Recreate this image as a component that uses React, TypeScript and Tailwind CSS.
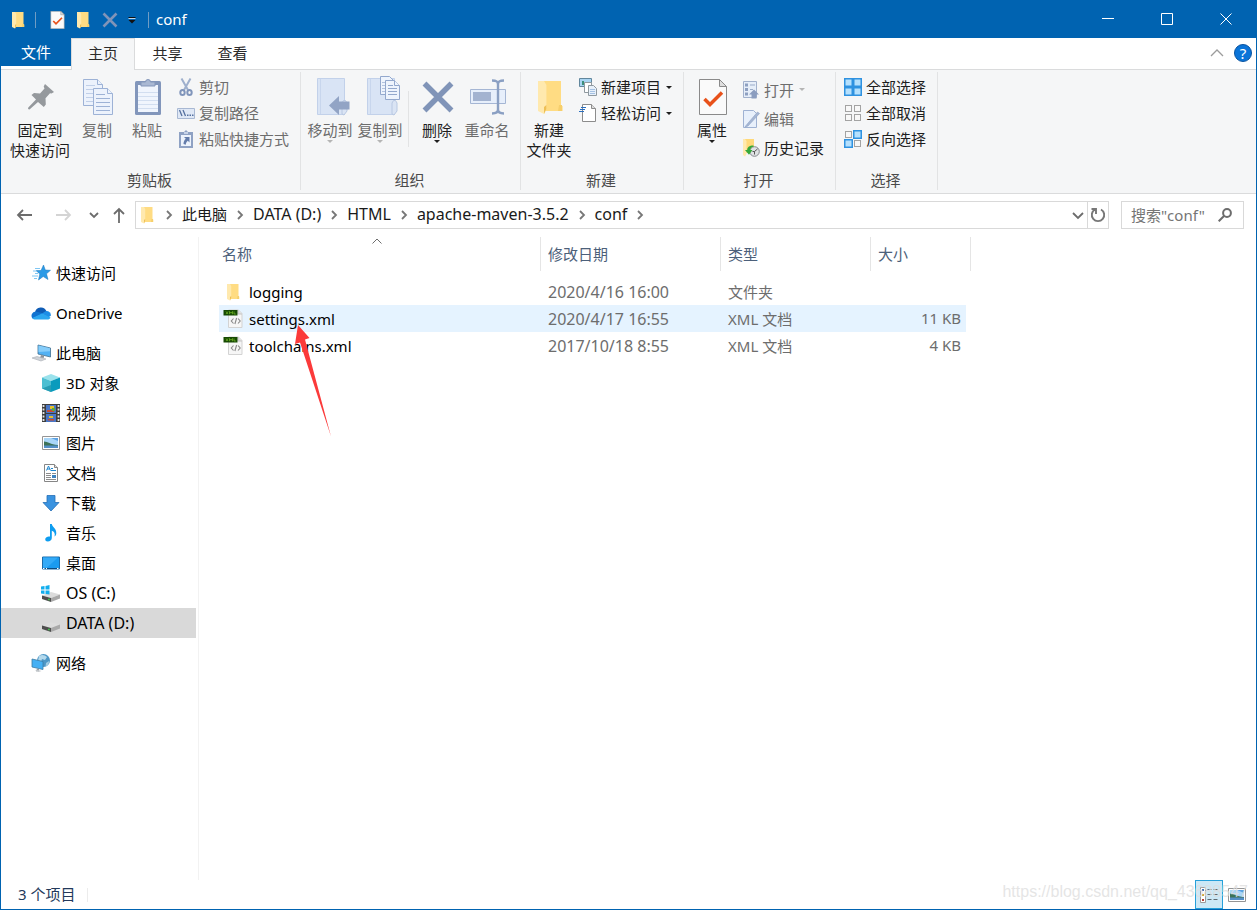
import React from "react";

type IconProps = { className?: string };

const FolderIcon = ({ className = "h-[18px] w-[14px]" }: IconProps) => (
  <svg viewBox="0 0 14 18" className={className} aria-hidden="true">
    <path d="M4 1h8.500v12.500h.8V16H4z" fill="#ffdc83" />
    <path d="M11.500 13h1.500v3h-2z" fill="#f6cf6c" />
    <path d="M1 1h3l1.200 2v12L4 17.500 1 16z" fill="#ffe9ae" />
    <path d="M5.200 13v2L4 17.500V14z" fill="#eebf55" />
  </svg>
);

const CheckDocIcon = ({ className = "h-[18px] w-[15px]" }: IconProps) => (
  <svg viewBox="0 0 28 36" className={className} aria-hidden="true">
    <path d="M.5.5h20l7 7v28H.5z" fill="#fafafa" stroke="#8a8a8a" />
    <path d="M20.500.5v7h7z" fill="#dedede" stroke="#8a8a8a" />
    <path d="M5.500 20l5.500 5.500L23 13.500" fill="none" stroke="#e8511a" strokeWidth="3.500" />
  </svg>
);

const PinIcon = () => (
  <svg viewBox="0 0 26 26" className="size-[26px]" aria-hidden="true">
    <path d="M17 0l9 8-2.500 1.500-1.500-.3-4.500 5 .3 6.300-2 2.500-5.800-5L1.500 25.500 0 25l.3-1.500L8 15.500 3.500 11l2.500-2 6 .5 4.500-5-.8-2z" fill="#95999d" />
  </svg>
);

const CopyIcon = () => (
  <svg viewBox="0 0 32 38" className="h-[38px] w-8" aria-hidden="true">
    <g stroke="#9db2d6" fill="#ecf2fc">
      <path d="M1.500 1.500h14l5 5v21h-19z" />
      <path d="M15.500 1.500v5h5" />
      <path d="M4 7.500h9M4 11.500h13M4 15.500h13M4 19.500h13M4 23.500h13" stroke="#c0cfe8" />
      <path d="M11.500 10.500h14l5 5v21h-19z" />
      <path d="M25.500 10.500v5h5" />
      <path d="M14 16.500h9M14 20.500h14M14 24.500h14M14 28.500h14M14 32.500h14" />
    </g>
  </svg>
);

const PasteIcon = () => (
  <svg viewBox="0 0 28 38" className="h-[38px] w-7" aria-hidden="true">
    <rect x="1" y="3" width="26" height="34" rx="1.500" fill="#8296bb" />
    <path d="M4 7h20v27H4z" fill="#f0f5fd" />
    <path d="M4 14.500h20M4 18.500h20M4 22.500h20M4 26.500h20M4 30.500h20" stroke="#d2def0" />
    <path d="M7 4h4.500a2.500 2.500 0 0 1 5 0H21v4H7z" fill="#a9b8d3" stroke="#8497ba" />
  </svg>
);

const CutIcon = () => (
  <svg viewBox="0 0 18 18" className="size-[18px]" fill="none" aria-hidden="true">
    <path d="M4.500.5L11 12M13.500.5L7 12" stroke="#9fb0cd" strokeWidth="2" />
    <ellipse cx="5.500" cy="14.500" rx="2.200" ry="2.500" stroke="#8095bb" strokeWidth="2" />
    <ellipse cx="12.500" cy="14.500" rx="2.200" ry="2.500" stroke="#8095bb" strokeWidth="2" />
  </svg>
);

const PathIcon = () => (
  <svg viewBox="0 0 18 18" className="size-[18px]" aria-hidden="true">
    <path d="M.5 4.500h17v10H.5z" fill="#dfe8f6" stroke="#a8b8d3" />
    <path d="M2.500 6l2.500 6M6 6l2.500 6" stroke="#54709f" strokeWidth="1.300" />
    <path d="M10 10.500h1.500V12H10zM12.500 10.500H14V12h-1.500zM15 10.500h1.500V12H15z" fill="#54709f" />
  </svg>
);

const PasteShortcutIcon = () => (
  <svg viewBox="0 0 18 18" className="size-[18px]" aria-hidden="true">
    <path d="M2 2h5l2-2 2 2h5v16H2z" fill="#8fa2c4" />
    <path d="M4 5h10v11H4z" fill="#edf3fc" />
    <path d="M7 2h4v2H7z" fill="#c7d3e8" />
    <path d="M7 7h5.500v5.500l-1.700-1.700c-1.500 1.200-2 2.500-2 4L6.500 14c0-2 .7-3.800 2.300-5.200z" fill="#637cab" />
  </svg>
);

const Notebook = () => (
  <>
    <path d="M.5.5h27v36H.5z" fill="#d9e4f5" stroke="#c2d1ea" />
    <path d="M3.500 1v35" stroke="#c8d6ed" />
    <path d="M25 36V25l1.500-2.500h2L30 25v8l-3 4z" fill="#dae4f4" stroke="#b8c8e2" />
  </>
);

const MoveToIcon = () => (
  <svg viewBox="0 0 33 38" className="ml-1 h-[38px] w-[33px]" aria-hidden="true">
    <Notebook />
    <path d="M12 27.500L22 18v5.500h10.500v8H22V37z" fill="#92a4c5" />
  </svg>
);

const CopyToIcon = () => (
  <svg viewBox="0 0 33 38" className="ml-1 h-[38px] w-[33px] overflow-visible" aria-hidden="true">
    <Notebook />
    <g fill="#eef4fd" stroke="#93a8cd">
      <path d="M13.500-1.500h9l4 4v14h-13z" />
      <path d="M15 4.500h4M15 7.500h4M15 10.500h4M15 13.500h4" stroke="#b3c3df" />
      <path d="M18.500 2.500h9l5 5v14h-14z" />
      <path d="M27.500 2.500v5h5M21 7.500h5M21 10.500h9M21 13.500h9M21 16.500h9" />
    </g>
  </svg>
);

const DeleteIcon = () => (
  <svg viewBox="0 0 32 32" className="size-8" aria-hidden="true">
    <path d="M2.500 2.500l27 27M29.500 2.500l-27 27" stroke="#8094b8" strokeWidth="5.500" />
  </svg>
);

const RenameIcon = () => (
  <svg viewBox="0 0 37 36" className="h-9 w-[37px]" aria-hidden="true">
    <path d="M.5 10.500h35v14H.5z" fill="#e7effb" stroke="#a5b6d4" />
    <path d="M3 13h18v9H3z" fill="#a3b3d0" />
    <path d="M22 1.500c4 0 6 .5 6 4v25c0 3-2 4-6 4M34 1.500c-4 0-6 .5-6 4v25c0 3 2 4 6 4" fill="none" stroke="#8ba0c3" strokeWidth="2.400" />
  </svg>
);

const NewItemIcon = () => (
  <svg viewBox="0 0 18 18" className="size-[18px]" aria-hidden="true">
    <path d="M.5.5h12v8H.5z" fill="#a8d4f2" stroke="#62879d" />
    <path d="M3 3h2v4H3z" fill="#3c8f7c" />
    <path d="M5.500 4.500h7v10h-7z" fill="#fff" stroke="#8f999f" />
    <path d="M9.500 7.500h5l3 3v7h-8z" fill="#e7f0fa" stroke="#8f999f" />
    <path d="M11 11.500h5M11 13.500h5M11 15.500h5" stroke="#a5c1e2" />
  </svg>
);

const EasyAccessIcon = () => (
  <svg viewBox="0 0 18 18" className="size-[18px]" aria-hidden="true">
    <path d="M3.500.5h9l4 4v13h-13z" fill="#fff" stroke="#8c8c8c" />
    <path d="M12.500.5v4h4" fill="#ddd" stroke="#8c8c8c" />
    <path d="M2 3.500h5M1 5.500h5M0 7.500h5" stroke="#2a6fc0" />
  </svg>
);

const OpenIcon = () => (
  <svg viewBox="0 0 18 18" className="size-[18px]" aria-hidden="true">
    <path d="M1.500.5h13v16h-13z" fill="#e6eef9" stroke="#a2b1cc" />
    <path d="M3 2.500h3v3H3zM3 7h3v3H3zM3 11.500h3v3H3z" fill="#8ea0c1" />
    <path d="M8 4h5M8 8.500h3" stroke="#9aabc8" />
    <path d="M12 8.500l5 5h-2.500v4h-5v-4H7z" fill="#8b9dbf" />
  </svg>
);

const EditIcon = () => (
  <svg viewBox="0 0 18 18" className="size-[18px]" aria-hidden="true">
    <path d="M1.500.5h10l3 3v14h-13z" fill="#e8f0fb" stroke="#9fb2d3" />
    <path d="M4 15.500L15.500 2l2 1.500L6 16l-3 1z" fill="#a5b6d3" stroke="#8ea2c6" strokeWidth=".6" />
  </svg>
);

const HistoryIcon = () => (
  <svg viewBox="0 0 18 18" className="size-[18px]" aria-hidden="true">
    <path d="M3 0h9v14H3z" fill="#ffd97a" />
    <path d="M1 0h2l1.500 2v13L3 17.500 1 16z" fill="#ffe9ae" />
    <circle cx="12.500" cy="12.500" r="4.800" fill="#dfe2e4" stroke="#85898d" />
    <path d="M15.500 10l-3 2.500v3M12.500 12.500h-2" stroke="#555" fill="none" />
    <path d="M11.500 6.500C7 6.500 5.200 8.500 5.200 11H3l4 4.800 3.500-4.800H8.300c0-2 1.200-3 3.200-3.200z" fill="#35a83a" />
  </svg>
);

// four tiles, the lit ones are drawn in blue
const TilesIcon = ({ lit }: { lit: boolean[] }) => (
  <svg viewBox="0 0 18 18" className="size-[18px]" aria-hidden="true">
    {[[0, 0], [9, 0], [0, 9], [9, 9]].map(([x, y], i) =>
      lit[i] ? (
        <rect key={i} x={x + 0.75} y={y + 0.75} width="7.500" height="7.500" fill="#b5e0fd" stroke="#2f92e0" strokeWidth="1.500" />
      ) : (
        <rect key={i} x={x + 1.5} y={y + 1.5} width="6" height="6" fill="#f8f8f8" stroke="#a3a3a3" />
      )
    )}
  </svg>
);

const StarIcon = () => (
  <svg viewBox="0 0 20 20" className="size-5" aria-hidden="true">
    <path d="M12.500 2l1.800 5 5.200.3-4 3.500 1.500 5.700-4.800-3-4.700 3.500 1.300-6L5 7.500h5z" fill="#2a9ae6" stroke="#1b76bd" strokeWidth=".5" />
    <path d="M4 5.500h5M2 8h4M4 10.500h3M1 13h6M3 15.500h3" stroke="#7fc6f3" strokeWidth="1.200" />
  </svg>
);

const OneDriveIcon = () => (
  <svg viewBox="0 0 20 20" className="size-5" aria-hidden="true">
    <path d="M4 9.500a6 6 0 0 1 11.500-1.300L12 12z" fill="#0f5cb5" />
    <path d="M4.500 8.500a4.300 4.300 0 0 0-3 7L13 10.500z" fill="#1173d0" />
    <path d="M11 10.500l4-2.500a4.200 4.200 0 0 1 4.800 4.800l-3 2z" fill="#1e8ee6" />
    <path d="M1.300 15l9.700-4.500 8.500 4c-.5 1.500-1.800 2-3 2H4.500c-1.500 0-2.500-.5-3.200-1.500z" fill="#2ba6f0" />
  </svg>
);

const ComputerIcon = () => (
  <svg viewBox="0 0 20 20" className="size-5" aria-hidden="true">
    <path d="M7 2l12.500 3v9L7 11z" fill="#52b1f3" stroke="#42708f" strokeWidth=".8" />
    <path d="M7.500 2.500L19 5.300v3L7.500 9z" fill="#86cdfa" />
    <path d="M10 12l3 .7v2l-4 .3z" fill="#8b9299" />
    <path d="M1 15l5-1.500 9 2.500-5 2z" fill="#cfd3d8" stroke="#a8adb3" strokeWidth=".6" />
  </svg>
);

const CubeIcon = () => (
  <svg viewBox="0 0 20 20" className="size-5" aria-hidden="true">
    <path d="M10 1l9 3.500-9 3.500-9-3.500z" fill="#9be2ec" />
    <path d="M1 4.500L10 8v11l-9-3.500z" fill="#4bbfd2" />
    <path d="M19 4.500L10 8v11l9-3.500z" fill="#0a9bbd" />
    <path d="M1 15.500L10 12v7z" fill="#279db4" />
  </svg>
);

const VideoIcon = () => (
  <svg viewBox="0 0 20 20" className="size-5" aria-hidden="true">
    <path d="M1 1h18v18H1z" fill="#3e3e3e" />
    <path d="M2.500 2v17M17.500 2v17" stroke="#e4e4e4" strokeWidth="1.800" strokeDasharray="2 1.500" />
    <path d="M5 2h10v8H5zM5 11h10v8H5z" fill="#4976c5" />
    <path d="M9 3h4v3H9zM8 13h4v2H8z" fill="#e8c02a" />
    <path d="M6 7h7v2H6zM7 16h6v1.500H7z" fill="#c64a35" />
    <path d="M11 5h3v3h-3z" fill="#5ea83b" />
  </svg>
);

const PictureIcon = ({ className = "size-5" }: IconProps) => (
  <svg viewBox="0 0 20 20" className={className} aria-hidden="true">
    <path d="M1.500 3.500h17v13h-17z" fill="#fff" stroke="#959595" />
    <path d="M3 5h14v10H3z" fill="#a9d6f8" />
    <path d="M3 5h7l7 3V5z" fill="#5ba0e2" />
    <path d="M3 8.500c4 0 6 3 14 3.500v1H3z" fill="#3d7257" />
    <path d="M3 12.500h14V15H3z" fill="#548fc7" />
  </svg>
);

const DocumentIcon = () => (
  <svg viewBox="0 0 20 20" className="size-5" aria-hidden="true">
    <path d="M3.500 1.500h10l3 3v14h-13z" fill="#fff" stroke="#868686" />
    <path d="M13.500 1.500v3h3" fill="#ddd" stroke="#868686" />
    <path d="M5.500 7.500L7.500 3l2 4.500M6 6h3M10 5.500h2M10 7.500h5" fill="none" stroke="#1e87cf" />
    <path d="M5 10.500h5M5 12.500h5M5 14.500h5M5 16.500h10M11 10.500h4" stroke="#8c8c8c" />
    <path d="M11 12h4v3h-4z" fill="#3f83bf" />
  </svg>
);

const DownloadIcon = () => (
  <svg viewBox="0 0 20 20" className="size-5" aria-hidden="true">
    <path d="M6 2.500h8v7h4L10 18 2 9.500h4z" fill="#3a93e0" stroke="#256fb6" strokeWidth=".8" />
  </svg>
);

const MusicIcon = () => (
  <svg viewBox="0 0 20 20" className="size-5" aria-hidden="true">
    <path d="M9 1h1.800c.3 3 4.900 4.500 4.500 9.500-.1 1.500-1 2.500-1.800 3 .9-3-.3-5-2.700-5.800V15c0 2.200-2 3.500-4 3.500S4 17.300 4.300 15.800C4.600 14 7 13 9 13.600z" fill="#0e9df0" />
  </svg>
);

const DesktopIcon = () => (
  <svg viewBox="0 0 20 20" className="size-5" aria-hidden="true">
    <path d="M1.500 4h17v12h-17z" fill="#1a9bf0" stroke="#1a6ba9" />
    <path d="M2 4.500h15L6 14.500H2z" fill="#33aaf7" />
    <path d="M2 15.500h16" stroke="#0c4a7d" />
    <path d="M2 15.500h1.500M5 15.500h1M16 15.500h1.500" stroke="#fff" />
  </svg>
);

const DriveIcon = ({ system = false }: { system?: boolean }) => (
  <svg viewBox="0 0 20 20" className="size-5" aria-hidden="true">
    <path d="M1 12.500l9-3.500 9 2.500-9 3.500z" fill="#dcdcdc" />
    <path d="M1 12.500l9 2.500v4l-9-3z" fill="#4e4e4e" />
    <path d="M19 11.500L10 15v4l9-3.500z" fill="#a9a9a9" />
    <path d="M7 15.700h1.800v1.500H7z" fill="#3fc04b" />
    {system && (
      <path d="M0 3.500l3.500-.5v3.500H0zM4.500 2.900L8.500 2v4.500h-4zM0 7.500h3.500V11L0 10.500zM4.500 7.500h4v4l-4-.6z" fill="#12aeee" />
    )}
  </svg>
);

const NetworkIcon = () => (
  <svg viewBox="0 0 20 20" className="size-5" aria-hidden="true">
    <circle cx="12.500" cy="7.500" r="6.500" fill="#4e97c6" />
    <path d="M8 3c3-2 6-1 8 1l-2 3-3-1-1 3-3-1z" fill="#b4d9ec" />
    <path d="M15 10l3-2c.3 3-1.500 5-3.500 5.500z" fill="#a1cbe2" />
    <path d="M1 6l11 2.500v8L1 14z" fill="#45b0f4" stroke="#3b7ba5" strokeWidth=".8" />
    <path d="M6 15.500l2 .5v2l-3 .5z" fill="#9aa0a6" />
    <path d="M4 17.500l3-.5 3.500 1-3 1z" fill="#c3c7cb" />
  </svg>
);

const XmlIcon = () => (
  <svg viewBox="0 0 20 20" className="size-5" aria-hidden="true">
    <path d="M5.500 1h10L19 4.500V18.500H5.500z" fill="#f6f6f6" stroke="#d3d3d3" />
    <path d="M15 1v4h4" fill="#e2e2e2" stroke="#c4c4c4" />
    <path d="M.5 1h14v5.500H.5z" fill="#174a03" />
    <path d="M3 2.500l2 2.500M5 2.500L3 5M6.500 5.200V2.500L8 4.200l1.500-1.700v2.700M11 2.500v2.500h1.800" fill="none" stroke="#6fb325" strokeWidth=".8" />
    <path d="M10.500 9.500L8.300 12l2.200 2.500M15 9.500l2.200 2.500-2.200 2.500M13.600 9l-1.700 6" fill="none" stroke="#898989" strokeWidth="1.100" />
  </svg>
);

const Chevron = ({ className = "", d = "M1 1l4 4-4 4" }: { className?: string; d?: string }) => (
  <svg viewBox="0 0 10 10" className={`size-2.5 shrink-0 overflow-visible ${className}`} fill="none" stroke="currentColor" strokeWidth="1.800" aria-hidden="true">
    <path d={d} />
  </svg>
);

const Caret = ({ className = "" }: IconProps) => (
  <svg viewBox="0 0 6 3" className={`h-[3px] w-1.5 ${className}`} aria-hidden="true">
    <path d="M0 0h6L3 3z" fill="currentColor" />
  </svg>
);

interface ToolProps {
  icon: React.ReactNode;
  lines: string[];
  className?: string;
  muted?: boolean;
  caret?: boolean;
}

const BigTool = ({ icon, lines, className = "w-[50px]", muted, caret }: ToolProps) => (
  <button type="button" className={`flex shrink-0 flex-col items-center ${muted ? "text-[#6d6d6d]" : "text-[#1e1e1e]"} ${className}`}>
    <span className="flex h-10 items-center justify-center pl-0.5">{icon}</span>
    <span className="mt-[3px] whitespace-nowrap leading-5">
      {lines.map((line) => (
        <span key={line} className="block">{line}</span>
      ))}
    </span>
    {caret && <Caret className={muted ? "text-[#b5b5b5]" : "text-[#1e1e1e]"} />}
  </button>
);

interface SmallToolProps {
  icon: React.ReactNode;
  label: string;
  muted?: boolean;
  caret?: boolean;
  className?: string;
}

const SmallTool = ({ icon, label, muted, caret, className = "h-[26px]" }: SmallToolProps) => (
  <button type="button" className={`flex items-center gap-1 whitespace-nowrap ${muted ? "text-[#6d6d6d]" : "text-[#1e1e1e]"} ${className}`}>
    {icon}
    <span>{label}</span>
    {caret && <Caret className={`ml-px ${muted ? "text-[#b5b5b5]" : ""}`} />}
  </button>
);

const Group = ({ title, className, children }: { title: string; className: string; children: React.ReactNode }) => (
  <section className={`flex shrink-0 flex-col justify-between border-r border-[#e2e3e4] ${className}`}>
    <div className="flex">{children}</div>
    <h2 className="pr-0.5 text-center leading-5 text-[#4a4a4a]">{title}</h2>
  </section>
);

const Ribbon = () => (
  <div className="flex h-[124px] overflow-hidden border-b border-[#dadbdc] bg-[#f5f6f7] pt-0.5 pb-[3px]">
    <Group title="剪贴板" className="w-[300px]">
      <div className="flex pt-[5px] pl-[7px]">
        <BigTool icon={<PinIcon />} lines={["固定到", "快速访问"]} className="w-16" />
        <BigTool icon={<CopyIcon />} lines={["复制"]} muted />
        <BigTool icon={<PasteIcon />} lines={["粘贴"]} muted />
      </div>
      <div className="flex flex-col pt-0.5 pl-[5px]">
        <SmallTool icon={<CutIcon />} label="剪切" muted />
        <SmallTool icon={<PathIcon />} label="复制路径" muted />
        <SmallTool icon={<PasteShortcutIcon />} label="粘贴快捷方式" muted />
      </div>
    </Group>
    <Group title="组织" className="w-[220px]">
      <div className="flex pt-[5px] pl-1">
        <BigTool icon={<MoveToIcon />} lines={["移动到"]} muted caret />
        <BigTool icon={<CopyToIcon />} lines={["复制到"]} muted caret />
        <div className="mx-[3px] mt-3.5 h-14 w-px bg-[#e2e3e4]" />
        <BigTool icon={<DeleteIcon />} lines={["删除"]} caret />
        <BigTool icon={<RenameIcon />} lines={["重命名"]} muted />
      </div>
    </Group>
    <Group title="新建" className="w-[163px]">
      <div className="flex pt-[5px]">
        <BigTool icon={<FolderIcon className="h-9 w-7" />} lines={["新建", "文件夹"]} className="w-14" />
      </div>
      <div className="flex flex-col pt-0.5 pl-0.5">
        <SmallTool icon={<NewItemIcon />} label="新建项目" caret />
        <SmallTool icon={<EasyAccessIcon />} label="轻松访问" caret />
      </div>
    </Group>
    <Group title="打开" className="w-[152px]">
      <div className="flex pt-[5px] pl-[3px]">
        <BigTool icon={<CheckDocIcon className="h-9 w-7" />} lines={["属性"]} caret />
      </div>
      <div className="flex flex-col pt-[3px] pl-[5px]">
        <SmallTool icon={<OpenIcon />} label="打开" muted caret className="h-[29px]" />
        <SmallTool icon={<EditIcon />} label="编辑" muted className="h-[29px]" />
        <SmallTool icon={<HistoryIcon />} label="历史记录" className="h-[29px]" />
      </div>
    </Group>
    <Group title="选择" className="w-[102px]">
      <div className="flex flex-col pt-0.5 pl-2">
        <SmallTool icon={<TilesIcon lit={[true, true, true, true]} />} label="全部选择" />
        <SmallTool icon={<TilesIcon lit={[false, false, false, false]} />} label="全部取消" />
        <SmallTool icon={<TilesIcon lit={[false, true, true, false]} />} label="反向选择" />
      </div>
    </Group>
  </div>
);

const TitleBar = () => (
  <header className="flex h-[37px] items-center bg-[#0063b1] pr-px text-white">
    <div className="flex items-center pl-2.5">
      <FolderIcon />
      <span className="ml-2.5 h-4 w-px bg-[#6f9cc4]" />
      <button type="button" aria-label="属性" className="ml-3.5"><CheckDocIcon /></button>
      <button type="button" aria-label="新建文件夹" className="ml-[11px]"><FolderIcon /></button>
      <button type="button" aria-label="删除" className="ml-3">
        <svg viewBox="0 0 16 16" className="size-4"><path d="M1.500 1.500l13 13M14.500 1.500l-13 13" stroke="#8094b8" strokeWidth="2.600" /></svg>
      </button>
      <button type="button" aria-label="自定义快速访问工具栏" className="ml-2.5">
        <svg viewBox="0 0 8 8" className="size-2"><path d="M.5 1.500h7" stroke="#111" /><path d="M.5 2.500h7" stroke="#bdd5ea" /><path d="M.5 4h7L4 7.500z" fill="#111" /></svg>
      </button>
      <span className="ml-3 h-4 w-px bg-[#6f9cc4]" />
      <h1 className="ml-[7px] pb-0.5">conf</h1>
    </div>
    <div className="ml-auto flex h-full pb-px">
      {[
        { label: "最小化", d: "M0 5.500h12" },
        { label: "最大化", d: "M.5.5h11v11H.5z" },
        { label: "关闭", d: "M.5.5l11 11M11.500.5l-11 11" },
      ].map((control) => (
        <button key={control.label} type="button" aria-label={control.label} className="flex w-[59px] items-center justify-center">
          <svg viewBox="0 0 12 12" className="size-3" fill="none" stroke="#fff"><path d={control.d} /></svg>
        </button>
      ))}
    </div>
  </header>
);

const Tabs = () => (
  <nav className="flex h-8 border-b border-[#dadbdc] bg-white text-[#2b2b2b]">
    <button type="button" className="h-7 w-[70px] bg-[#0063b1] text-white">文件</button>
    <button type="button" className="-mb-px w-16 border-x border-t border-[#dadbdc] bg-[#f5f6f7] pb-[3px]">主页</button>
    <button type="button" className="w-[65px] pb-0.5">共享</button>
    <button type="button" className="w-[65px] pb-0.5">查看</button>
    <div className="ml-auto flex items-center gap-2.5 pr-1 pb-px">
      <button type="button" aria-label="最小化功能区">
        <svg viewBox="0 0 14 8" className="h-2 w-3.5" fill="none" stroke="#9c9c9c" strokeWidth="1.300"><path d="M1 7l6-6 6 6" /></svg>
      </button>
      <button type="button" aria-label="帮助" className="size-[18px] rounded-full border border-[#0a54a0] bg-[#0a74d8] leading-4 text-white">?</button>
    </div>
  </nav>
);

const crumbs = ["DATA (D:)", "HTML", "apache-maven-3.5.2", "conf"];

const CrumbArrow = () => <Chevron className="mx-2 text-[#777]" d="M3 1l4 4-4 4" />;

const AddressRow = () => (
  <div className="flex h-[43px] items-center pr-3 pb-px text-[#1a1a1a]">
    <div className="flex w-[134px] items-center pl-[15px] text-[#6c6c6c]">
      <button type="button" aria-label="后退">
        <svg viewBox="0 0 16 12" className="h-3 w-4" fill="none" stroke="currentColor" strokeWidth="1.800"><path d="M7 1L2 6l5 5M2 6h14" /></svg>
      </button>
      <button type="button" aria-label="前进" className="ml-6 text-[#d4d4d4]">
        <svg viewBox="0 0 16 12" className="h-3 w-4" fill="none" stroke="currentColor" strokeWidth="1.800"><path d="M9 1l5 5-5 5M14 6H0" /></svg>
      </button>
      <button type="button" aria-label="最近浏览的位置" className="ml-[17px]">
        <Chevron d="M1 3l4 4 4-4" />
      </button>
      <button type="button" aria-label="上移" className="ml-3.5">
        <svg viewBox="0 0 12 16" className="h-4 w-3" fill="none" stroke="currentColor" strokeWidth="1.800"><path d="M1 7l5-5 5 5M6 2v14" /></svg>
      </button>
    </div>
    <div className="flex h-7 min-w-0 flex-1 items-center border border-[#d9d9d9] pl-1">
      <FolderIcon />
      <span className="ml-0.5 flex items-center">
        <CrumbArrow />
        <a href="#" className="whitespace-nowrap pb-0.5">此电脑</a>
        {crumbs.map((crumb) => (
          <React.Fragment key={crumb}>
            <CrumbArrow />
            <a href="#" className="whitespace-nowrap pb-0.5 text-base leading-5">{crumb}</a>
          </React.Fragment>
        ))}
        <CrumbArrow />
      </span>
      <button type="button" aria-label="上一个位置" className="ml-auto mr-1 text-[#6c6c6c]">
        <Chevron d="M0 3l5 5 5-5" />
      </button>
      <button type="button" aria-label="刷新" className="flex h-full w-[21px] items-center justify-center border-l border-[#d9d9d9] text-[#777]">
        <svg viewBox="0 0 16 16" className="size-4" fill="none" stroke="currentColor" strokeWidth="1.900"><path d="M11 2.500a6.200 6.200 0 1 1-6 0M1.500 2H6v5" /></svg>
      </button>
    </div>
    <div className="ml-3 flex h-7 w-[123px] items-center border border-[#d9d9d9] pl-[9px]">
      <input type="text" aria-label="搜索" placeholder={'搜索"conf"'} className="w-[83px] outline-none placeholder:text-[#757575]" />
      <svg viewBox="0 0 14 14" className="ml-1 size-3.5" fill="none" stroke="#6c6c6c" strokeWidth="2"><circle cx="9" cy="5" r="3.900" /><path d="M6 8l-5.300 5.300" /></svg>
    </div>
  </div>
);

const places = [
  { name: "快速访问", icon: <StarIcon />, top: true },
  { name: "OneDrive", icon: <OneDriveIcon />, top: true },
  { name: "此电脑", icon: <ComputerIcon />, top: true },
  { name: "3D 对象", icon: <CubeIcon /> },
  { name: "视频", icon: <VideoIcon /> },
  { name: "图片", icon: <PictureIcon /> },
  { name: "文档", icon: <DocumentIcon /> },
  { name: "下载", icon: <DownloadIcon /> },
  { name: "音乐", icon: <MusicIcon /> },
  { name: "桌面", icon: <DesktopIcon /> },
  { name: "OS (C:)", icon: <DriveIcon system />, drive: true },
  { name: "DATA (D:)", icon: <DriveIcon />, drive: true, active: true },
  { name: "网络", icon: <NetworkIcon />, top: true },
];

const Sidebar = () => (
  <aside className="w-[198px] shrink-0 border-r border-[#f2f2f2] pt-[11px] pr-0.5">
    {places.map((place) => (
      <a
        key={place.name}
        href="#"
        className={`flex h-[30px] items-center gap-[5px] text-black ${place.top ? "mt-2.5 pl-[30px]" : "pl-10"} ${place.drive ? "text-base" : ""} ${place.active ? "bg-[#d9d9d9]" : ""}`}
      >
        {place.icon}
        {place.name}
      </a>
    ))}
  </aside>
);

const files = [
  { name: "logging", date: "2020/4/16 16:00", type: "文件夹", size: "" },
  { name: "settings.xml", date: "2020/4/17 16:55", type: "XML 文档", size: "11 KB" },
  { name: "toolchains.xml", date: "2017/10/18 8:55", type: "XML 文档", size: "4 KB" },
];

const FileList = () => (
  <main className="relative flex-1 pl-5">
    <table className="w-[752px] table-fixed border-collapse text-left">
      <colgroup>
        <col className="w-[322px]" />
        <col className="w-[180px]" />
        <col className="w-[150px]" />
        <col className="w-[100px]" />
      </colgroup>
      <thead>
        <tr className="h-[41px] align-top text-[#4c607a]">
          {["名称", "修改日期", "类型", "大小"].map((heading, i) => (
            <th key={heading} className="relative p-0 font-normal">
              <div className={`h-[34px] border-r border-[#e5e5e5] leading-[34px] ${i === 0 ? "pl-[3px]" : "pl-[7px]"}`}>{heading}</div>
              {i === 0 && (
                <svg viewBox="0 0 10 6" className="absolute top-px right-[159px] h-1.5 w-2.5" fill="none" stroke="#6c6c6c"><path d="M.5 5.500L5 1l4.500 4.500" /></svg>
              )}
            </th>
          ))}
        </tr>
      </thead>
      <tbody>
        {files.map((file) => {
          const bg = file.name === "settings.xml" ? "bg-[#e5f3ff]" : "";
          return (
            <tr key={file.name} className="h-[27px] text-[#6d6d6d]">
              <td className={`p-0 text-black ${bg}`}>
                <span className="flex items-center gap-1.5 pl-1">
                  {file.type === "文件夹" ? <span className="flex w-5 justify-center"><FolderIcon /></span> : <XmlIcon />}
                  {file.name}
                </span>
              </td>
              <td className={`p-0 pl-[7px] text-base leading-5 ${bg}`}>{file.date}</td>
              <td className={`p-0 pl-[7px] ${bg}`}>{file.type}</td>
              <td className="p-0 pr-[5px] text-right">
                <span className={`block h-[27px] pr-[5px] leading-[27px] ${bg}`}>{file.size}</span>
              </td>
            </tr>
          );
        })}
      </tbody>
    </table>
    {/* red pointer over settings.xml */}
    <svg viewBox="0 0 36 112" className="absolute top-[88px] left-[96px] h-[112px] w-9" aria-hidden="true">
      <path d="M3 0L14.500 13l-4.500 1.500L36 111.500 5 17.500 0 19z" fill="#fb3a3a" />
    </svg>
  </main>
);

const StatusBar = () => (
  <footer className="relative flex h-[29px] items-center pr-[9px] text-[#23395b]">
    <span className="pb-0.5 pl-[17px]">3 个项目</span>
    <span className="ml-3 h-3.5 w-px bg-[#ececec]" />
    <button type="button" aria-label="详细信息" className="ml-auto flex h-full w-7 items-center justify-center border border-[#26a0da] bg-[#cce8f6]">
      <svg viewBox="0 0 20 18" className="h-[18px] w-5">
        <path d="M1.500 1.500h5v15h-5z" fill="#fff" stroke="#9a9a9a" />
        <path d="M3 3h2v2H3z" fill="#3b74b5" />
        <path d="M3 8h2v2H3z" fill="#d0a63c" />
        <path d="M3 13h2v2H3z" fill="#b53d32" />
        <path d="M8.500 3.500h4M14.500 3.500h4M8.500 8.500h4M14.500 8.500h4M8.500 13.500h4M14.500 13.500h4" stroke="#5e6a70" />
      </svg>
    </button>
    <button type="button" aria-label="大缩略图" className="ml-1"><PictureIcon /></button>
    <span className="pointer-events-none absolute right-2 top-0 font-['Liberation_Sans',sans-serif] text-base leading-6 text-[#dedede]/80">
      https://blog.csdn.net/qq_43688547
    </span>
  </footer>
);

export default function App() {
  return (
    <div className="flex min-h-screen flex-col border border-[#0063b1] bg-white font-['Noto_Sans','Noto_Sans_CJK_SC',sans-serif] text-[15px] leading-5">
      <TitleBar />
      <Tabs />
      <Ribbon />
      <AddressRow />
      <div className="flex flex-1">
        <Sidebar />
        <FileList />
      </div>
      <StatusBar />
    </div>
  );
}
